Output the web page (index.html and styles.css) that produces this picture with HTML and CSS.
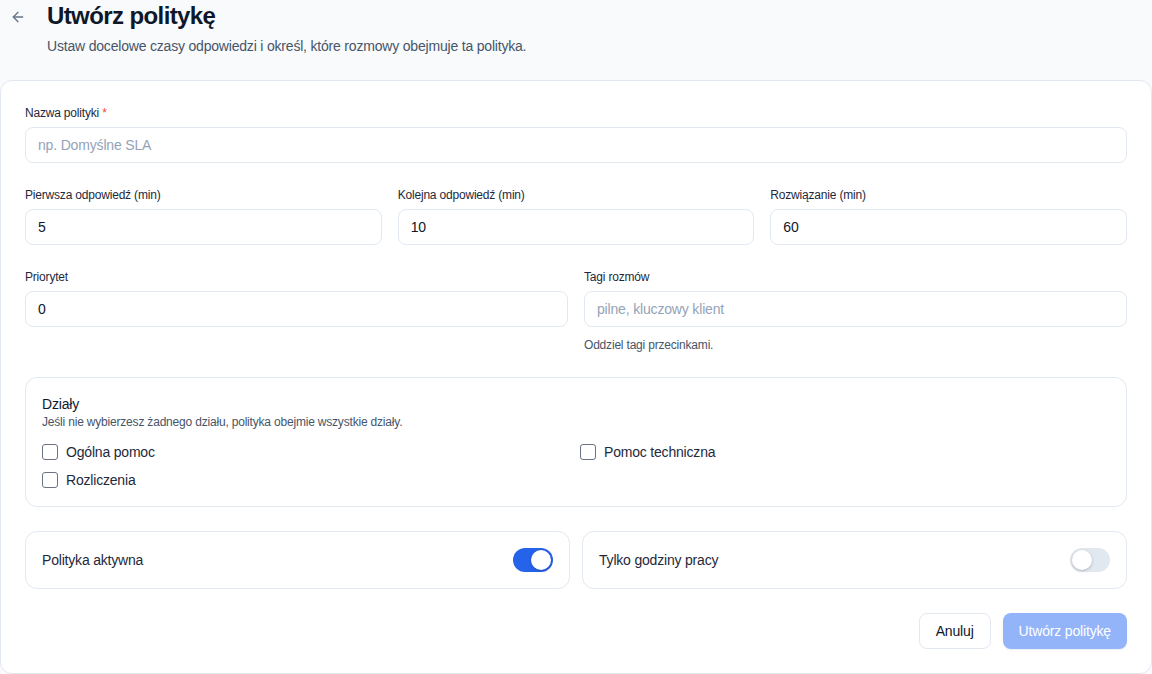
FILE: index.html
```
<!DOCTYPE html>
<html lang="pl">
<head>
    <meta charset="UTF-8">
    <meta name="viewport" content="width=device-width, initial-scale=1.0">
    <title>Utwórz politykę</title>
    <link rel="stylesheet" href="styles.css">
</head>
<body>
    <header class="page-header">
        <button class="back-btn" type="button" aria-label="Wróć">
            <svg width="16" height="16" viewBox="0 0 24 24" fill="none" stroke="currentColor" stroke-width="2" stroke-linecap="round" stroke-linejoin="round"><path d="M12 19l-7-7 7-7"/><path d="M19 12H5"/></svg>
        </button>
        <div class="header-text">
            <h1>Utwórz politykę</h1>
            <p class="subtitle">Ustaw docelowe czasy odpowiedzi i określ, które rozmowy obejmuje ta polityka.</p>
        </div>
    </header>

    <form class="card">
        <div class="field">
            <label>Nazwa polityki <span class="req">*</span></label>
            <input type="text" placeholder="np. Domyślne SLA">
        </div>

        <div class="row row-3">
            <div class="field">
                <label>Pierwsza odpowiedź (min)</label>
                <input type="text" value="5">
            </div>
            <div class="field">
                <label>Kolejna odpowiedź (min)</label>
                <input type="text" value="10">
            </div>
            <div class="field">
                <label>Rozwiązanie (min)</label>
                <input type="text" value="60">
            </div>
        </div>

        <div class="row row-2">
            <div class="field">
                <label>Priorytet</label>
                <input type="text" value="0">
            </div>
            <div class="field">
                <label>Tagi rozmów</label>
                <input type="text" placeholder="pilne, kluczowy klient">
                <span class="hint">Oddziel tagi przecinkami.</span>
            </div>
        </div>

        <fieldset class="depts">
            <div class="depts-title">Działy</div>
            <div class="depts-sub">Jeśli nie wybierzesz żadnego działu, polityka obejmie wszystkie działy.</div>
            <div class="depts-grid">
                <label class="check"><span class="box"></span>Ogólna pomoc</label>
                <label class="check"><span class="box"></span>Pomoc techniczna</label>
                <label class="check"><span class="box"></span>Rozliczenia</label>
            </div>
        </fieldset>

        <div class="row row-toggles">
            <div class="toggle-card">
                <span>Polityka aktywna</span>
                <span class="switch on"><span class="knob"></span></span>
            </div>
            <div class="toggle-card">
                <span>Tylko godziny pracy</span>
                <span class="switch"><span class="knob"></span></span>
            </div>
        </div>

        <div class="actions">
            <button type="button" class="btn btn-outline">Anuluj</button>
            <button type="button" class="btn btn-primary" disabled>Utwórz politykę</button>
        </div>
    </form>
</body>
</html>
```

FILE: styles.css
```
:root {
    --color-bg: #f8fafc;
    --color-border: #e2e8f0;
    --color-text: #0f172a;
    --color-label: #1e293b;
    --color-muted: #475569;
    --color-placeholder: #94a3b8;
    --color-blue: #2563eb;
    --font-sans: 'Liberation Sans', Arial, sans-serif;
}

* {
    margin: 0;
    padding: 0;
    box-sizing: border-box;
}

html, body {
    background: var(--color-bg);
    color: var(--color-text);
    font-family: var(--font-sans);
    letter-spacing: -0.012em;
}

.page-header {
    display: flex;
    align-items: flex-start;
    gap: 17px;
    padding: 2px 0 0 6px;
    height: 80px;
}

.back-btn {
    width: 24px;
    height: 24px;
    margin-top: 3px;
    display: flex;
    align-items: center;
    justify-content: center;
    background: none;
    border: none;
    color: #64748b;
}

h1 {
    font-size: 24px;
    font-weight: 700;
    line-height: 28px;
    letter-spacing: -0.025em;
    color: var(--color-text);
}

.subtitle {
    margin-top: 6px;
    font-size: 14px;
    line-height: 20px;
    color: var(--color-muted);
}

.card {
    background: #fff;
    border: 1px solid var(--color-border);
    border-radius: 12px;
    padding: 24px;
    display: flex;
    flex-direction: column;
    gap: 24px;
}

.field {
    display: flex;
    flex-direction: column;
}

.field label {
    font-size: 12px;
    line-height: 16px;
    color: var(--color-label);
    margin-bottom: 6px;
}

.req {
    color: #ef4444;
}

.field input {
    height: 36px;
    border: 1px solid var(--color-border);
    border-radius: 8px;
    padding: 0 12px;
    font-family: var(--font-sans);
    font-size: 14px;
    letter-spacing: -0.012em;
    color: var(--color-text);
    background: #fff;
    outline: none;
}

.field input::placeholder {
    color: var(--color-placeholder);
}

.hint {
    margin-top: 10px;
    font-size: 12px;
    line-height: 16px;
    color: var(--color-muted);
}

.row {
    display: grid;
    gap: 16px;
}

.row-3 {
    grid-template-columns: repeat(3, 1fr);
}

.row-2 {
    grid-template-columns: repeat(2, 1fr);
}

.row-toggles {
    grid-template-columns: repeat(2, 1fr);
    gap: 12px;
}

.depts {
    border: 1px solid var(--color-border);
    border-radius: 12px;
    padding: 16px;
}

.depts-title {
    font-size: 14px;
    line-height: 20px;
    color: var(--color-text);
}

.depts-sub {
    font-size: 12px;
    line-height: 16px;
    color: var(--color-muted);
}

.depts-grid {
    margin-top: 12px;
    display: grid;
    grid-template-columns: 1fr 1fr;
    gap: 8px;
}

.check {
    display: flex;
    align-items: center;
    gap: 8px;
    font-size: 14px;
    line-height: 20px;
    color: #1e293b;
}

.box {
    width: 16px;
    height: 16px;
    border: 1px solid #6b7280;
    border-radius: 3px;
    background: #fff;
}

.toggle-card {
    display: flex;
    align-items: center;
    justify-content: space-between;
    border: 1px solid var(--color-border);
    border-radius: 12px;
    padding: 16px;
    font-size: 14px;
    line-height: 20px;
    color: #1e293b;
    height: 58px;
}

.switch {
    width: 40px;
    height: 24px;
    border-radius: 12px;
    background: var(--color-border);
    padding: 2px;
    display: flex;
}

.switch .knob {
    width: 20px;
    height: 20px;
    border-radius: 50%;
    background: #fff;
    box-shadow: 0 1px 3px rgba(15, 23, 42, 0.25);
}

.switch.on {
    background: var(--color-blue);
    justify-content: flex-end;
}

.actions {
    display: flex;
    justify-content: flex-end;
    gap: 12px;
}

.btn {
    height: 36px;
    padding: 0 16px;
    border-radius: 8px;
    font-family: var(--font-sans);
    font-size: 14px;
    letter-spacing: -0.012em;
}

.btn-outline {
    background: #fff;
    border: 1px solid var(--color-border);
    color: var(--color-text);
}

.btn-primary {
    background: #93b4f8;
    border: none;
    color: #fff;
    box-shadow: 0 1px 2px rgba(15, 23, 42, 0.08);
}
```
